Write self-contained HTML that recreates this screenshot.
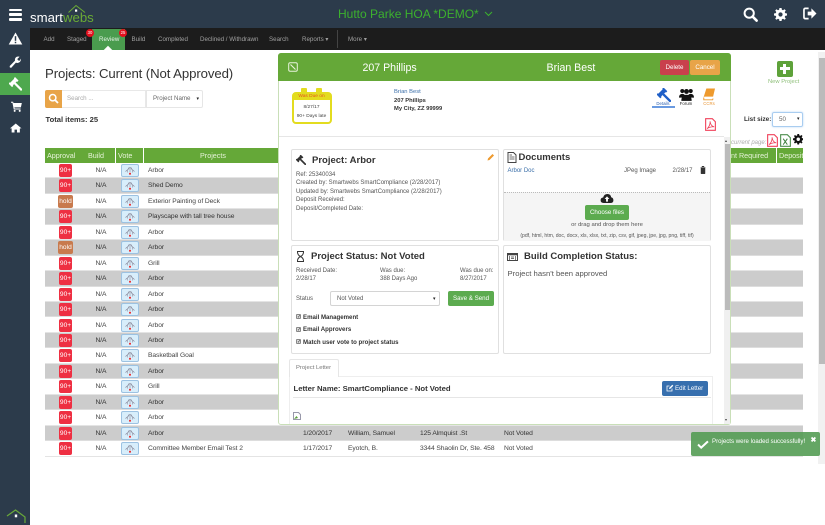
<!DOCTYPE html>
<html><head><meta charset="utf-8"><title>Projects</title>
<style>
html,body{margin:0;padding:0;background:#fff}
body{width:825px;height:525px;position:relative;overflow:hidden;font-family:"Liberation Sans",sans-serif;color:#333;filter:blur(.25px)}
div,span,b,i,svg,a{position:absolute;font-style:normal;white-space:nowrap;box-sizing:border-box}
.nav{top:34px;font-size:6.2px;color:#a0a0a0;line-height:12px}
.r{left:45px;width:758px;height:15.45px;border-bottom:1px solid #e4e4e4;font-size:6.7px;letter-spacing:-.07px;color:#444;background:#fff}
.r.g{background:#ccc;color:#333;border-bottom:1px solid #ddd}
.r span{top:4px;line-height:8px}
.r .n{left:50.5px;top:4px;line-height:8px}
.r .p{left:103px}
.b90{left:14px;top:1px;width:13px;height:13px;background:#ee2f42;border-radius:2px;color:#fff;font-size:6.6px;font-weight:normal;text-align:center;line-height:13px;letter-spacing:0}
.bh{left:13px;top:1px;width:15px;height:13px;background:#c87a4d;border-radius:2px;color:#fff;font-size:6.6px;font-weight:normal;text-align:center;line-height:13px;letter-spacing:0}
.v{left:76px;top:1px;width:18px;height:13px;background:#d8eefb;border:1px solid #9cc2e2;border-radius:2px}
.v svg{left:2px;top:0;width:12px;height:11px}
.th{top:148px;height:15px;background:#65a838;color:#e6f3d8;font-size:7.2px;line-height:15px;padding-left:2px}
.pn{background:#fff;border:1px solid #e0e0e0;border-radius:2px}
.h{font-weight:bold;font-size:9.5px;color:#333;line-height:12px}
.s{font-size:6px;color:#555;line-height:8.65px}
.c{font-size:6.1px;font-weight:bold;color:#333;line-height:8px;left:303px}
.cb{left:296px;width:5px;height:5px;background:#ddd;border:1px solid #888;border-radius:1px;color:#222;font-size:5px;line-height:4px;text-align:center}
</style></head><body>
<svg width="0" height="0" style="position:absolute"><defs>
<symbol id="gv" viewBox="0 0 16 16"><g transform="rotate(-45 8 8)"><rect x="3.5" y="2.300" width="9" height="4.600" rx=".5" fill="currentColor"/><rect x="2.300" y="1.500" width="2.200" height="6.200" rx=".4" fill="currentColor"/><rect x="11.500" y="1.500" width="2.200" height="6.200" rx=".4" fill="currentColor"/><rect x="6.700" y="6.500" width="2.700" height="12.500" rx="1" fill="currentColor"/></g></symbol>
<symbol id="vt" viewBox="0 0 12 11"><path d="M1.500 6.500 4 4.500 5 2.800 7 2.800 8 4.500 10.500 6.500" fill="none" stroke="#889" stroke-width=".8"/><path d="M3.500 7.500V5.200M6 7V3.200M8.500 7.500V5.200" stroke="#99a" stroke-width=".7"/><rect x="5.100" y="7.800" width="1.800" height="1.800" fill="#e22"/></symbol>
<symbol id="pdf" viewBox="0 0 12 14"><path d="M.7.7H8L11.300 4V13.300H.7Z" fill="#fff" stroke="#f0415a" stroke-width="1.200"/><path d="M2.200 11.500C4.500 10 6 6 5.500 3.500 6 7 7.500 9 10 9.500 7.500 9.300 4.500 10 2.200 11.500Z" fill="none" stroke="#f0415a" stroke-width=".9"/></symbol>
<symbol id="cog" viewBox="0 0 16 16"><path d="M6.700 0H9.300L9.700 2.200 11.100 2.800 13 1.500 14.500 3 13.200 4.900 13.800 6.300 16 6.700V9.300L13.800 9.700 13.200 11.100 14.500 13 13 14.500 11.100 13.200 9.700 13.800 9.300 16H6.700L6.300 13.800 4.900 13.200 3 14.500 1.500 13 2.800 11.100 2.200 9.700 0 9.300V6.700L2.200 6.300 2.800 4.900 1.500 3 3 1.500 4.900 2.800 6.300 2.200Z" fill="currentColor"/><circle cx="8" cy="8" r="2.600" fill="var(--h,#2c3b4b)"/></symbol>
</defs></svg>

<!-- top bar -->
<div style="left:0;top:0;width:825px;height:28px;background:#2c3b4b"></div>
<div style="left:0;top:0;width:30px;height:525px;background:#2c3b4b"></div>
<div style="left:30px;top:28px;width:795px;height:22px;background:#1c1c1c"></div>

<!-- hamburger -->
<div style="left:9px;top:8.500px;width:13px;height:2.600px;background:#fff;border-radius:1px"></div>
<div style="left:9px;top:13px;width:13px;height:2.600px;background:#fff;border-radius:1px"></div>
<div style="left:9px;top:18px;width:13px;height:2.600px;background:#fff;border-radius:1px"></div>

<!-- logo -->
<div style="left:30px;top:11px;font-size:13.200px;color:#fff;line-height:14px">smart<span style="position:static;color:#6aab35">webs</span></div>
<svg style="left:67px;top:4px" width="20" height="10" viewBox="0 0 20 10"><path d="M1.500 8.500 9 1.500 18 8.500" fill="none" stroke="#6aab35" stroke-width="1"/><rect x="8" y="5.500" width="2.200" height="2.200" fill="#fff"/></svg>

<!-- title -->
<div style="left:338px;top:5px;font-size:12px;color:#3cb12e;line-height:18px">Hutto Parke HOA *DEMO*</div>
<svg style="left:483.500px;top:11px" width="9" height="6" viewBox="0 0 9 6"><path d="M1 1 4.500 4.500 8 1" fill="none" stroke="#3cb12e" stroke-width="1"/></svg>

<!-- top right icons -->
<svg style="left:743px;top:6.500px" width="15" height="15" viewBox="0 0 15 15"><circle cx="6.200" cy="6.200" r="4.600" fill="none" stroke="#fff" stroke-width="2"/><path d="M9.600 9.600 13.600 13.600" stroke="#fff" stroke-width="2.600" stroke-linecap="round"/></svg>
<svg style="left:774px;top:7.500px;color:#fff" width="13" height="13"><use href="#cog"/></svg>
<svg style="left:802.500px;top:7px" width="14" height="13" viewBox="0 0 15 14"><path d="M6 1.500H2.500Q1 1.500 1 3V11Q1 12.500 2.500 12.500H6" fill="none" stroke="#fff" stroke-width="1.800"/><path d="M5 5H9V1.500L14.500 7 9 12.500V9H5Z" fill="#fff"/></svg>

<!-- sidebar icons -->
<svg style="left:8px;top:31.500px" width="15" height="13" viewBox="0 0 15 14"><path d="M7.500.5 14.800 13.500H.2Z" fill="#fff"/><rect x="6.700" y="4.500" width="1.600" height="5" fill="#2c3b4b"/><rect x="6.700" y="10.500" width="1.600" height="1.600" fill="#2c3b4b"/></svg>
<svg style="left:9px;top:56px" width="12" height="12" viewBox="0 0 13 13"><path d="M.8 10.800 6.500 5Q6 2 8.500 .8 10 .3 11.500 .8L9 3.200 9.800 4.800 11.500 5.200 12.800 2.800Q13.200 6 10.500 7.200 9 8 7.500 7.200L2.500 12.700Q1.500 13 .8 12.200Z" fill="#fff"/></svg>
<div style="left:0;top:73px;width:30px;height:22px;background:#4ea84e"></div>
<svg style="left:9px;top:76.500px;color:#fff" width="13" height="14"><use href="#gv"/></svg>
<svg style="left:10.500px;top:101px" width="11" height="11" viewBox="0 0 12 12"><path d="M0 .8H2.300L2.700 2.200H11.800L10.800 7H3.700L4 8.200H10.500V9.300H3L1.600 1.900H0Z" fill="#fff"/><circle cx="4" cy="10.800" r="1.100" fill="#fff"/><circle cx="9.500" cy="10.800" r="1.100" fill="#fff"/></svg>
<svg style="left:10px;top:123px" width="11.500" height="10" viewBox="0 0 14 12"><path d="M7 .5 14 6.500H12V11.500H8.500V8H5.500V11.500H2V6.500H0Z" fill="#fff"/></svg>
<svg style="left:6px;top:509px" width="21" height="15" viewBox="0 0 21 15"><path d="M1 7 9.500 1 19 8V14" fill="none" stroke="#69a93a" stroke-width="1.200"/><rect x="8.800" y="5.500" width="2.400" height="2.800" fill="#fff"/></svg>

<!-- nav -->
<div class="nav" style="left:43.500px">Add</div>
<div class="nav" style="left:67px">Staged</div>
<div style="left:92px;top:29px;width:33px;height:21px;background:#4a9c4e"></div>
<div class="nav" style="left:99px;color:#e4f2e4">Review</div>
<div style="left:105px;top:47px;width:6px;height:6px;background:#fff;transform:rotate(45deg)"></div>
<div style="left:86px;top:28.500px;width:8px;height:8px;background:#e3101e;border-radius:50%;color:#fff;font-size:4.200px;line-height:8px;text-align:center">30</div>
<div style="left:119px;top:28.500px;width:8px;height:8px;background:#e3101e;border-radius:50%;color:#fff;font-size:4.200px;line-height:8px;text-align:center">25</div>
<div class="nav" style="left:131.500px">Build</div>
<div class="nav" style="left:158px">Completed</div>
<div class="nav" style="left:200px">Declined / Withdrawn</div>
<div class="nav" style="left:269px">Search</div>
<div class="nav" style="left:302px">Reports ▾</div>
<div style="left:337px;top:30px;width:1px;height:18px;background:#444"></div>
<div class="nav" style="left:348px">More ▾</div>

<!-- page content -->
<div style="left:30px;top:50px;width:788px;height:475px;background:#fff"></div>
<div style="left:45px;top:65px;font-size:13.200px;line-height:17px;color:#333;letter-spacing:-.1px">Projects: Current (Not Approved)</div>

<div style="left:45px;top:90px;width:17px;height:18px;background:#e8a448;border-radius:2px 0 0 2px"></div>
<svg style="left:48px;top:93px" width="11" height="11" viewBox="0 0 11 11"><circle cx="4.700" cy="4.700" r="3.200" fill="none" stroke="#fff" stroke-width="1.500"/><path d="M7 7 10 10" stroke="#fff" stroke-width="1.800"/></svg>
<div style="left:62px;top:90px;width:84px;height:18px;border:1px solid #e8e8e8;border-left:0"></div>
<div style="left:67px;top:95px;font-size:6.200px;color:#aaa;line-height:8px">Search ...</div>
<div style="left:146px;top:90px;width:57px;height:18px;border:1px solid #e6e6e6;border-radius:0 2px 2px 0"></div>
<div style="left:153px;top:95px;font-size:6.200px;color:#666;line-height:8px">Project Name</div>
<div style="left:196.500px;top:95px;font-size:5px;color:#222;line-height:8px">▾</div>
<div style="left:45.500px;top:114.500px;font-size:7.600px;font-weight:bold;color:#333;line-height:10px">Total items: 25</div>

<!-- new project -->
<div style="left:776.500px;top:61px;width:16px;height:16px;background:#5ea23a;border-radius:2px"></div>
<div style="left:779.500px;top:67.400px;width:10px;height:3px;background:#fff"></div>
<div style="left:783px;top:64px;width:3px;height:10px;background:#fff"></div>
<div style="left:768px;top:78px;font-size:5.800px;color:#8fbf7a;line-height:8px">New Project</div>

<div style="left:744px;top:114.500px;font-size:6.400px;font-weight:bold;color:#333;line-height:9px">List size:</div>
<div style="left:772px;top:112px;width:31px;height:15px;border:1px solid #a9cdf0;border-radius:2px;box-shadow:0 0 2px #bcd9f5"></div>
<div style="left:779px;top:115px;font-size:6.200px;color:#666;line-height:9px">50</div>
<div style="left:797px;top:115px;font-size:5px;color:#222;line-height:9px">▾</div>
<div style="left:731px;top:138.500px;font-size:6px;color:#aaa;line-height:8px;font-style:italic">current page:</div>
<svg style="left:767px;top:133.500px" width="11" height="13"><use href="#pdf"/></svg>
<svg style="left:780px;top:133.500px" width="11" height="13" viewBox="0 0 12 14"><path d="M.7.7H8L11.300 4V13.300H.7Z" fill="#fff" stroke="#4e8f4e" stroke-width="1.200"/><path d="M3.500 5 8 11.500M8 5 3.500 11.500" stroke="#3d7f3d" stroke-width="1.100"/></svg>
<svg style="left:792.500px;top:134px;color:#111;--h:#fff" width="10.500" height="10.500"><use href="#cog"/></svg>

<!-- table header -->
<div class="th" style="left:45px;width:40.500px">Approval</div>
<div class="th" style="left:86px;width:29px">Build</div>
<div class="th" style="left:116px;width:27px">Vote</div>
<div class="th" style="left:144px;width:134px;padding:0;text-align:center;padding-left:4px">Projects</div>
<div class="th" style="left:731px;width:45px;padding:0">nt Required</div>
<div class="th" style="left:777px;width:26px;padding:0;padding-left:2px">Deposit</div>

<!-- rows -->
<div class="r" style="top:163px"><b class="b90">90+</b><span class="n">N/A</span><i class="v"><svg><use href="#vt"/></svg></i><span class="p">Arbor</span></div>
<div class="r g" style="top:178.450px"><b class="b90">90+</b><span class="n">N/A</span><i class="v"><svg><use href="#vt"/></svg></i><span class="p">Shed Demo</span></div>
<div class="r" style="top:193.900px"><b class="bh">hold</b><span class="n">N/A</span><i class="v"><svg><use href="#vt"/></svg></i><span class="p">Exterior Painting of Deck</span></div>
<div class="r g" style="top:209.350px"><b class="b90">90+</b><span class="n">N/A</span><i class="v"><svg><use href="#vt"/></svg></i><span class="p">Playscape with tall tree house</span></div>
<div class="r" style="top:224.800px"><b class="b90">90+</b><span class="n">N/A</span><i class="v"><svg><use href="#vt"/></svg></i><span class="p">Arbor</span></div>
<div class="r g" style="top:240.250px"><b class="bh">hold</b><span class="n">N/A</span><i class="v"><svg><use href="#vt"/></svg></i><span class="p">Arbor</span></div>
<div class="r" style="top:255.700px"><b class="b90">90+</b><span class="n">N/A</span><i class="v"><svg><use href="#vt"/></svg></i><span class="p">Grill</span></div>
<div class="r g" style="top:271.150px"><b class="b90">90+</b><span class="n">N/A</span><i class="v"><svg><use href="#vt"/></svg></i><span class="p">Arbor</span></div>
<div class="r" style="top:286.600px"><b class="b90">90+</b><span class="n">N/A</span><i class="v"><svg><use href="#vt"/></svg></i><span class="p">Arbor</span></div>
<div class="r g" style="top:302.050px"><b class="b90">90+</b><span class="n">N/A</span><i class="v"><svg><use href="#vt"/></svg></i><span class="p">Arbor</span></div>
<div class="r" style="top:317.500px"><b class="b90">90+</b><span class="n">N/A</span><i class="v"><svg><use href="#vt"/></svg></i><span class="p">Arbor</span></div>
<div class="r g" style="top:332.950px"><b class="b90">90+</b><span class="n">N/A</span><i class="v"><svg><use href="#vt"/></svg></i><span class="p">Arbor</span></div>
<div class="r" style="top:348.400px"><b class="b90">90+</b><span class="n">N/A</span><i class="v"><svg><use href="#vt"/></svg></i><span class="p">Basketball Goal</span></div>
<div class="r g" style="top:363.850px"><b class="b90">90+</b><span class="n">N/A</span><i class="v"><svg><use href="#vt"/></svg></i><span class="p">Arbor</span></div>
<div class="r" style="top:379.300px"><b class="b90">90+</b><span class="n">N/A</span><i class="v"><svg><use href="#vt"/></svg></i><span class="p">Grill</span></div>
<div class="r g" style="top:394.750px"><b class="b90">90+</b><span class="n">N/A</span><i class="v"><svg><use href="#vt"/></svg></i><span class="p">Arbor</span></div>
<div class="r" style="top:410.200px"><b class="b90">90+</b><span class="n">N/A</span><i class="v"><svg><use href="#vt"/></svg></i><span class="p">Arbor</span></div>
<div class="r g" style="top:425.650px"><b class="b90">90+</b><span class="n">N/A</span><i class="v"><svg><use href="#vt"/></svg></i><span class="p">Arbor</span><span style="left:258px">1/20/2017</span><span style="left:303px">William, Samuel</span><span style="left:375px">125 Almquist .St</span><span style="left:459px">Not Voted</span></div>
<div class="r" style="top:441.100px"><b class="b90">90+</b><span class="n">N/A</span><i class="v"><svg><use href="#vt"/></svg></i><span class="p">Committee Member Email Test 2</span><span style="left:258px">1/17/2017</span><span style="left:303px">Eyotch, B.</span><span style="left:375px">3344 Shaolin Dr, Ste. 458</span><span style="left:459px">Not Voted</span></div>

<!-- page scrollbar -->
<div style="left:818px;top:52px;width:7px;height:412px;background:#f1f1f1"></div>
<div style="left:818.500px;top:58px;width:6px;height:306px;background:#bbb"></div>

<!-- modal -->
<div style="left:278px;top:53px;width:453px;height:372px;background:#fff;border:1px solid #c9dfb8;border-radius:3px"></div>
<div style="left:278px;top:53px;width:453px;height:28px;background:#65a838;border-radius:3px 3px 0 0"></div>
<svg style="left:288px;top:62px" width="10" height="10" viewBox="0 0 10 10"><rect x=".7" y=".7" width="8.600" height="8.600" rx="1.500" fill="none" stroke="#e8f3dc" stroke-width="1"/><path d="M2.500 2.500 7.500 7.500" stroke="#e8f3dc" stroke-width="1.100"/></svg>
<div style="left:362.500px;top:60.500px;font-size:10.600px;color:#fff;line-height:14px">207 Phillips</div>
<div style="left:546.500px;top:60.500px;font-size:10.600px;color:#fff;line-height:14px">Brian Best</div>
<div style="left:660px;top:60px;width:29px;height:15px;background:#c9404c;border-radius:2px;color:#fff;font-size:6.200px;line-height:15px;text-align:center">Delete</div>
<div style="left:690px;top:60px;width:30px;height:15px;background:#e8a448;border-radius:2px;color:#fff;font-size:6.200px;line-height:15px;text-align:center">Cancel</div>

<!-- calendar -->
<div style="left:301px;top:88px;width:5.500px;height:5px;background:#e3dc1f;border-radius:1px"></div>
<div style="left:316px;top:88px;width:5.500px;height:5px;background:#e3dc1f;border-radius:1px"></div>
<div style="left:291.500px;top:92px;width:40px;height:31.500px;background:#fff;border:2px solid #e3dc1f;border-top:8.500px solid #e3dc1f;border-radius:4px"></div>
<div style="left:291.500px;top:94px;width:40px;text-align:center;font-size:4.800px;color:#e4561f;line-height:6px">Was Due on</div>
<div style="left:291.500px;top:104.700px;width:40px;text-align:center;font-size:4.800px;color:#444;line-height:6px">8/27/17</div>
<div style="left:291.500px;top:113.700px;width:40px;text-align:center;font-size:4.800px;color:#444;line-height:6px">90+ Days late</div>

<!-- address -->
<div style="left:394px;top:88px;font-size:5.800px;color:#3a6ea8;line-height:8.700px">Brian Best</div>
<div style="left:394px;top:96.500px;font-size:5.800px;color:#333;line-height:8.700px;font-weight:bold">207 Phillips</div>
<div style="left:394px;top:105.300px;font-size:5.800px;color:#333;line-height:8.700px;font-weight:bold">My City, ZZ 99999</div>

<!-- tabs -->
<svg style="left:656.500px;top:87.500px;color:#1f5fc7" width="14" height="14"><use href="#gv"/></svg>
<div style="left:653px;top:100.500px;width:20px;text-align:center;font-size:4.300px;color:#2a5fb0;line-height:5px">Details</div>
<div style="left:652px;top:106px;width:23px;height:1.500px;background:#6a9ae0"></div>
<svg style="left:678.500px;top:87.500px" width="15" height="13.500" viewBox="0 0 16 14"><circle cx="3.500" cy="3" r="2.200" fill="#111"/><circle cx="12.500" cy="3" r="2.200" fill="#111"/><circle cx="8" cy="3.500" r="2.600" fill="#111"/><path d="M0 10Q0 6 3.500 6T7 10ZM9 10Q9 6 12.500 6T16 10Z" fill="#111"/><path d="M2.500 13.500Q2.500 7 8 7T13.500 13.500Z" fill="#111"/></svg>
<div style="left:675px;top:100.500px;width:22px;text-align:center;font-size:4.300px;color:#222;line-height:5px">Forum</div>
<svg style="left:703px;top:88px" width="12.500" height="12.500" viewBox="0 0 13 13"><path d="M3.500 .5H12.500L10.500 9H1.500L.5 10Z" fill="#ee9a2e"/><path d="M.8 10 .8 12.300H10L10.500 11" fill="none" stroke="#ee9a2e" stroke-width="1"/></svg>
<div style="left:699px;top:100.500px;width:20px;text-align:center;font-size:4.300px;color:#e89433;line-height:5px">CCRs</div>
<svg style="left:705px;top:117.500px" width="11" height="13"><use href="#pdf"/></svg>

<!-- modal inner -->
<div style="left:279px;top:136px;width:445px;height:1px;background:#e6e6e6"></div>
<div style="left:724px;top:137px;width:6px;height:287px;background:#f0f0f0"></div>
<div style="left:724.500px;top:144px;width:5.500px;height:166px;background:#bbb"></div>

<!-- project panel -->
<div class="pn" style="left:291px;top:149px;width:208px;height:92px"></div>
<svg style="left:296px;top:154.500px;color:#333" width="10" height="10"><use href="#gv"/></svg>
<div class="h" style="left:312px;top:154.500px">Project: Arbor</div>
<svg style="left:487px;top:153px" width="8" height="8" viewBox="0 0 8 8"><path d="M.5 7.500 1 5.500 5.500 1 7 2.500 2.500 7Z" fill="#ee9a2e"/></svg>
<div class="s" style="left:296px;top:170.500px">Ref: 25340034<br>Created by: Smartwebs SmartCompliance (2/28/2017)<br>Updated by: Smartwebs SmartCompliance (2/28/2017)<br>Deposit Received:<br>Deposit/Completed Date:</div>

<!-- documents -->
<div class="pn" style="left:503px;top:149px;width:208px;height:92px"></div>
<svg style="left:507px;top:152px" width="10" height="11" viewBox="0 0 10 11"><path d="M1 .5H6.500L9 3V10.500H1Z" fill="none" stroke="#444"/><path d="M2.500 5H7.500M2.500 7H7.500M2.500 3H5" stroke="#444" stroke-width=".7"/></svg>
<div class="h" style="left:518.500px;top:152px">Documents</div>
<div class="s" style="left:507.500px;top:166.500px;color:#3a6ea8">Arbor Doc</div>
<div class="s" style="left:624px;top:166.500px">JPeg Image</div>
<div class="s" style="left:672.500px;top:166.500px">2/28/17</div>
<svg style="left:700px;top:166px" width="6" height="8" viewBox="0 0 6 8"><path d="M.5 1.500H5.500M2 1V.3H4V1M1 2H5V7.700H1Z" fill="#333" stroke="#333" stroke-width=".5"/></svg>
<div style="left:504px;top:191.500px;width:206px;height:49px;background:#f5f5f5;border-top:1px dotted #bbb"></div>
<svg style="left:600px;top:193px" width="14" height="10.500" viewBox="0 0 14 11"><path d="M3.500 10.500Q.3 10.500.3 7.500 .3 5 3 4.700 3.800 1 7.500 1 11 1 11.300 4.500 13.700 5 13.700 7.700 13.700 10.500 10.500 10.500Z" fill="#222"/><path d="M7 3.500 9.500 6.300H8V9H6V6.300H4.500Z" fill="#fff"/></svg>
<div style="left:585px;top:205px;width:44px;height:15px;background:#5cab4f;border-radius:2px;color:#fff;font-size:6.200px;line-height:15px;text-align:center">Choose files</div>
<div style="left:504px;top:220.500px;width:206px;text-align:center;font-size:5.900px;color:#555;line-height:8px">or drag and drop them here</div>
<div style="left:504px;top:233px;width:206px;text-align:center;font-size:5.100px;color:#555;line-height:6px">(pdf, html, htm, doc, docx, xls, xlsx, txt, zip, csv, gif, jpeg, jpe, jpg, png, tiff, tif)</div>

<!-- status -->
<div class="pn" style="left:291px;top:245px;width:208px;height:109px"></div>
<svg style="left:296px;top:250.500px" width="9" height="11" viewBox="0 0 9 11"><path d="M1 .5H8M1 10.500H8M1.500 1Q1.500 4 4.500 5.500 7.500 4 7.500 1M1.500 10Q1.500 7 4.500 5.500 7.500 7 7.500 10" fill="none" stroke="#333" stroke-width="1"/></svg>
<div class="h" style="left:311px;top:250.500px">Project Status: Not Voted</div>
<div class="s" style="left:296px;top:266.800px">Received Date:<br>2/28/17</div>
<div class="s" style="left:380px;top:266.800px">Was due:<br>388 Days Ago</div>
<div class="s" style="left:460px;top:266.800px">Was due on:<br>8/27/2017</div>
<div class="s" style="left:296px;top:294.500px">Status</div>
<div style="left:330px;top:291px;width:110px;height:15px;border:1px solid #d4d4d4;border-radius:2px"></div>
<div class="s" style="left:337px;top:294.500px">Not Voted</div>
<div style="left:433px;top:294.500px;font-size:5px;color:#222;line-height:8px">▾</div>
<div style="left:448px;top:291px;width:46px;height:15px;background:#5cab4f;border-radius:2px;color:#fff;font-size:6.200px;line-height:15px;text-align:center">Save &amp; Send</div>
<div class="cb" style="top:314px">✓</div><div class="c" style="top:313.500px">Email Management</div>
<div class="cb" style="top:326.500px">✓</div><div class="c" style="top:326px">Email Approvers</div>
<div class="cb" style="top:339px">✓</div><div class="c" style="top:338.500px">Match user vote to project status</div>

<!-- build -->
<div class="pn" style="left:503px;top:245px;width:208px;height:109px"></div>
<svg style="left:507px;top:252.500px" width="11" height="8" viewBox="0 0 11 8"><rect x=".5" y=".5" width="10" height="7" fill="none" stroke="#444"/><rect x=".5" y=".5" width="10" height="1.800" fill="#444"/><path d="M2.500 3V7M8.500 3V7M4 4H7M4 5.500H7" stroke="#444" stroke-width=".7"/></svg>
<div class="h" style="left:524px;top:250.500px">Build Completion Status:</div>
<div style="left:507.500px;top:268.500px;font-size:7.700px;color:#555;line-height:10px">Project hasn't been approved</div>

<!-- letter -->
<div style="left:289px;top:376px;width:424px;height:48px;border:1px solid #eee;border-bottom:0"></div>
<div style="left:289px;top:358.500px;width:50px;height:18.500px;background:#fff;border:1px solid #e6e6e6;border-bottom:0;border-radius:2px 2px 0 0"></div>
<div style="left:296px;top:363.500px;font-size:5.900px;color:#777;line-height:8px">Project Letter</div>
<div style="left:293.500px;top:383.500px;font-size:7.700px;font-weight:bold;color:#333;line-height:10px">Letter Name: SmartCompliance - Not Voted</div>
<div style="left:662px;top:381px;width:46px;height:15px;background:#376fae;border-radius:2px;color:#fff;font-size:6.200px;line-height:15px;padding-left:13px">Edit Letter</div>
<svg style="left:666px;top:384px" width="8" height="8" viewBox="0 0 8 8"><path d="M6 4.500V7H1V2H3.500" fill="none" stroke="#fff" stroke-width=".8"/><path d="M3 5 3.300 3.700 6.300.8 7.300 1.800 4.300 4.700Z" fill="#fff"/></svg>
<div style="left:293px;top:397px;width:418px;height:1px;background:#e6e6e6"></div>
<svg style="left:293px;top:412px" width="8" height="8" viewBox="0 0 8 8"><path d="M.5.5H5.500L7.500 2.500V7.500H.5Z" fill="#fff" stroke="#99a"/><path d="M1 7 3.500 4 5 6Z" fill="#5a9f3a"/></svg>
<div style="left:725px;top:417px;font-size:4px;color:#444;line-height:5px">▾</div>
<div style="left:725px;top:138px;font-size:4px;color:#444;line-height:5px">▴</div>

<!-- toast -->
<div style="left:691px;top:431.500px;width:129px;height:24.500px;background:rgba(84,156,84,.9);border-radius:2px"></div>
<svg style="left:696.500px;top:440px" width="12" height="9" viewBox="0 0 13 10"><path d="M1 5 4.500 8.500 12 1.500" fill="none" stroke="#fff" stroke-width="2.200"/></svg>
<div style="left:712px;top:438px;font-size:6.100px;color:#fff;line-height:8px">Projects were loaded successfully!</div>
<div style="left:810.500px;top:437px;font-size:7px;color:#fff;font-weight:bold;line-height:8px">✖</div>
</body></html>
